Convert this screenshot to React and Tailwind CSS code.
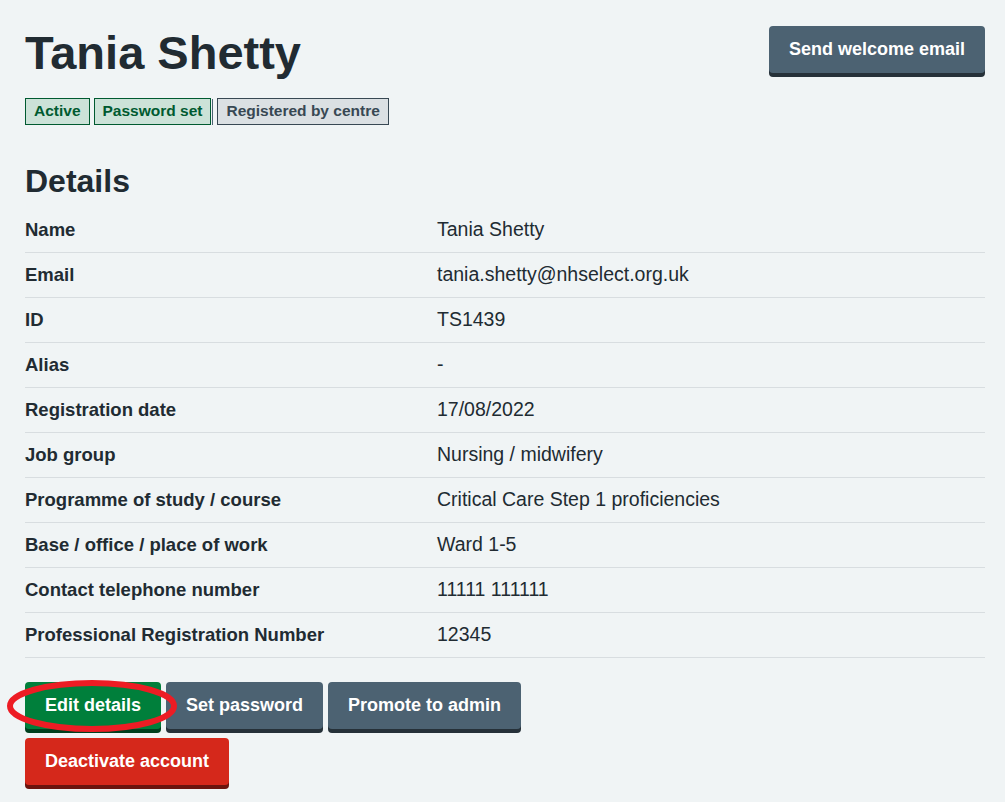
import React from 'react';

const rows = [
  ['Name', 'Tania Shetty'],
  ['Email', 'tania.shetty@nhselect.org.uk'],
  ['ID', 'TS1439'],
  ['Alias', '-'],
  ['Registration date', '17/08/2022'],
  ['Job group', 'Nursing / midwifery'],
  ['Programme of study / course', 'Critical Care Step 1 proficiencies'],
  ['Base / office / place of work', 'Ward 1-5'],
  ['Contact telephone number', '11111 111111'],
  ['Professional Registration Number', '12345'],
];

function Button({ children, color = 'grey' }) {
  const styles = {
    green: 'bg-[#007f3b] shadow-[0_4px_0_#00401e]',
    grey: 'bg-[#4c6272] shadow-[0_4px_0_#263139]',
    red: 'bg-[#d5281b] shadow-[0_4px_0_#6b140e]',
  };
  return (
    <button className={`${styles[color]} rounded-[4px] text-white font-bold text-[18px] leading-[24px] px-[20px] pt-[11px] pb-[12px]`}>
      {children}
    </button>
  );
}

export default function App() {
  return (
    <div className="min-h-[802px] bg-[#f0f4f5] text-[#212b32] font-['Liberation_Sans',Arial,sans-serif] pl-[25px] pr-[20px] pt-[26px]">
      {/* Header */}
      <div className="flex justify-between items-start">
        <div>
          <h1 className="text-[47px] leading-[54px] font-bold">Tania Shetty</h1>
          <div className="flex items-center mt-[18px]">
            <span className="border border-[#005a30] bg-[#cce2d8] text-[#005a30] text-[15.5px] font-bold leading-[20px] px-[8px] pt-[2px] pb-[3px]">Active</span>
            <span className="ml-[4px] border border-[#005a30] bg-[#cce2d8] text-[#005a30] text-[15.5px] font-bold leading-[20px] px-[8px] pt-[2px] pb-[3px]">Password set</span>
            <span className="ml-[1px] w-px h-[26px] bg-[#4c6272]"></span>
            <span className="ml-[4px] border border-[#384853] bg-[#dbe0e3] text-[#384853] text-[15.5px] font-bold leading-[20px] px-[8px] pt-[2px] pb-[3px]">Registered by centre</span>
          </div>
        </div>
        <Button>Send welcome email</Button>
      </div>

      {/* Details */}
      <h2 className="text-[32px] leading-[40px] font-bold mt-[36px]">Details</h2>
      <dl className="mt-[7px]">
        {rows.map(([k, v]) => (
          <div key={k} className="flex border-b border-[#d8dde0] h-[45px] items-center">
            <dt className="w-[412px] font-bold text-[18.5px]">{k}</dt>
            <dd className="text-[19.5px]">{v}</dd>
          </div>
        ))}
      </dl>

      {/* Actions */}
      <div className="relative mt-[24px] flex flex-col gap-[9px] items-start">
        <div className="flex gap-[5px]">
          <Button color="green">Edit details</Button>
          <Button>Set password</Button>
          <Button>Promote to admin</Button>
        </div>
        <Button color="red">Deactivate account</Button>
        <svg className="absolute left-[-19px] top-[-3px] pointer-events-none" width="174" height="56" viewBox="0 0 174 56">
          <ellipse cx="86" cy="27" rx="82" ry="23" fill="none" stroke="#ed1c24" strokeWidth="6" />
        </svg>
      </div>
    </div>
  );
}
